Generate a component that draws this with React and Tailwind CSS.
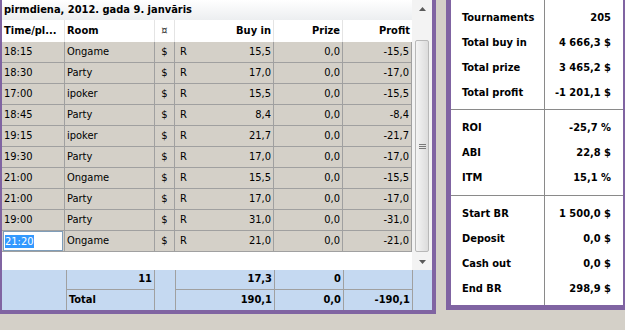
import React from "react";

const rows = [
  ["18:15", "Ongame", "15,5", "0,0", "-15,5"],
  ["18:30", "Party", "17,0", "0,0", "-17,0"],
  ["17:00", "ipoker", "15,5", "0,0", "-15,5"],
  ["18:45", "Party", "8,4", "0,0", "-8,4"],
  ["19:15", "ipoker", "21,7", "0,0", "-21,7"],
  ["19:30", "Party", "17,0", "0,0", "-17,0"],
  ["21:00", "Ongame", "15,5", "0,0", "-15,5"],
  ["21:00", "Party", "17,0", "0,0", "-17,0"],
  ["19:00", "Party", "31,0", "0,0", "-31,0"],
  ["21:20", "Ongame", "21,0", "0,0", "-21,0"],
];

const stats = [
  [
    ["Tournaments", "205"],
    ["Total buy in", "4 666,3 $"],
    ["Total prize", "3 465,2 $"],
    ["Total profit", "-1 201,1 $"],
  ],
  [
    ["ROI", "-25,7 %"],
    ["ABI", "22,8 $"],
    ["ITM", "15,1 %"],
  ],
  [
    ["Start BR", "1 500,0 $"],
    ["Deposit", "0,0 $"],
    ["Cash out", "0,0 $"],
    ["End BR", "298,9 $"],
  ],
];

// padding per summary section
const secPad = ["pt-[6px] pb-[3px]", "pt-[6px] pb-[4px]", "pt-[6px]"];

const Arrow = ({ down }) => (
  <svg width="7" height="4" viewBox="0 0 7 4" className={down ? "rotate-180" : ""}>
    <path d="M3.5 0 L7 4 L0 4 Z" fill="#5a5a5a" />
  </svg>
);

const App = () => {
  return (
    <div
      className="w-[625px] h-[330px] bg-[#d4d0c8] flex items-start overflow-hidden text-[11px] text-black"
      style={{ fontFamily: '"DejaVu Sans Condensed", "DejaVu Sans", sans-serif' }}
    >
      {/* day table */}
      <div className="w-[436px] h-[314px] shrink-0 bg-white border-l-2 border-r-4 border-b-4 border-[#8064a2] flex flex-col">
        <div className="flex h-[270px]">
          <div className="w-[410px] flex flex-col">
            <div className="h-[20px] flex items-center pl-[2px] font-bold bg-gradient-to-b from-white to-[#eceef0]">
              pirmdiena, 2012. gada 9. janvāris
            </div>
            <div className="h-[22px] flex font-bold bg-white">
              <div className="w-[63px] border-r border-[#e4e4e4] flex items-center pl-[2px]">Time/pl...</div>
              <div className="w-[90px] border-r border-[#e4e4e4] flex items-center pl-[2px]">Room</div>
              <div className="w-[20px] border-r border-[#e4e4e4] flex items-center justify-center font-normal text-[#333]">¤</div>
              <div className="w-[99px] border-r border-[#e4e4e4] flex items-center justify-end pr-[2px]">Buy in</div>
              <div className="w-[69px] border-r border-[#e4e4e4] flex items-center justify-end pr-[2px]">Prize</div>
              <div className="w-[69px] flex items-center justify-end pr-[2px]">Profit</div>
            </div>
            {rows.map((r, i) => (
              <div key={i} className="h-[21px] flex bg-[#d4d0c8] border-b border-[#a0a0a0]">
                <div className="w-[63px] border-r border-[#a0a0a0] flex items-center pl-[2px]">
                  {i === rows.length - 1 ? (
                    <div className="w-[60px] h-[20px] -ml-[1px] bg-white border border-[#7f9db9] flex items-center pl-[1px]">
                      <span className="bg-[#3399ff] text-white leading-[13px]">{r[0]}</span>
                    </div>
                  ) : (
                    r[0]
                  )}
                </div>
                <div className="w-[90px] border-r border-[#a0a0a0] flex items-center pl-[2px]">{r[1]}</div>
                <div className="w-[20px] border-r border-[#a0a0a0] flex items-center justify-center">$</div>
                <div className="w-[99px] border-r border-[#a0a0a0] flex items-center justify-between pl-[5px] pr-[2px]">
                  <span>R</span>
                  <span>{r[2]}</span>
                </div>
                <div className="w-[69px] border-r border-[#a0a0a0] flex items-center justify-end pr-[2px]">{r[3]}</div>
                <div className="w-[69px] border-r border-[#a0a0a0] flex items-center justify-end pr-[2px]">{r[4]}</div>
              </div>
            ))}
            <div className="flex-1 bg-white" />
          </div>
          {/* scrollbar */}
          <div className="w-[20px] flex flex-col bg-[#f3f3f3]">
            <div className="h-[17px] flex items-center justify-center">
              <Arrow />
            </div>
            <div className="flex-1 px-[3px] pt-[23px] pb-[1px]">
              <div className="h-full rounded-[2px] border border-[#b8b8b8] bg-gradient-to-r from-[#f4f4f4] to-[#dcdcdc] flex items-center justify-center">
                <div className="flex flex-col gap-[1px]">
                  <div className="w-[7px] h-[1px] bg-[#7a7a7a]" />
                  <div className="w-[7px] h-[1px] bg-[#7a7a7a]" />
                  <div className="w-[7px] h-[1px] bg-[#7a7a7a]" />
                </div>
              </div>
            </div>
            <div className="h-[17px] flex items-center justify-center">
              <Arrow down />
            </div>
          </div>
        </div>
        {/* totals */}
        <div className="flex-1 grid grid-cols-[65px_88px_21px_99px_69px_69px_1fr] grid-rows-[20px_20px] bg-[#c5d9f1] font-bold">
          <div className="row-span-2 border-r border-[#a0a0a0]" />
          <div className="border-r border-b border-[#a0a0a0] flex items-center justify-end pr-[2px]">11</div>
          <div className="row-span-2 border-r border-[#a0a0a0]" />
          <div className="border-r border-b border-[#a0a0a0] flex items-center justify-end pr-[2px]">17,3</div>
          <div className="border-r border-b border-[#a0a0a0] flex items-center justify-end pr-[2px]">0</div>
          <div className="border-r border-b border-[#a0a0a0]" />
          <div className="row-span-2" />
          <div className="border-r border-[#a0a0a0] flex items-center pl-[2px]">Total</div>
          <div className="border-r border-[#a0a0a0] flex items-center justify-end pr-[2px]">190,1</div>
          <div className="border-r border-[#a0a0a0] flex items-center justify-end pr-[2px]">0,0</div>
          <div className="border-r border-[#a0a0a0] flex items-center justify-end pr-[2px]">-190,1</div>
        </div>
      </div>

      {/* summary */}
      <div className="ml-[10px] w-[182px] h-[310px] shrink-0 bg-white border-l-[5px] border-r-[5px] border-b-[5px] border-[#8064a2] flex flex-col font-bold">
        {stats.map((sec, si) => (
          <div
            key={si}
            className={`flex ${si > 0 ? "border-t border-[#8a8a8a]" : ""} ${si === 2 ? "flex-1" : ""}`}
          >
            <div className={`w-[94px] border-r border-[#8a8a8a] pl-[11px] ${secPad[si]}`}>
              {sec.map(([l]) => (
                <div key={l} className="h-[25px] flex items-center">{l}</div>
              ))}
            </div>
            <div className={`flex-1 pr-[12px] ${secPad[si]}`}>
              {sec.map(([l, v]) => (
                <div key={l} className="h-[25px] flex items-center justify-end">{v}</div>
              ))}
            </div>
          </div>
        ))}
      </div>
    </div>
  );
};

export default App;
